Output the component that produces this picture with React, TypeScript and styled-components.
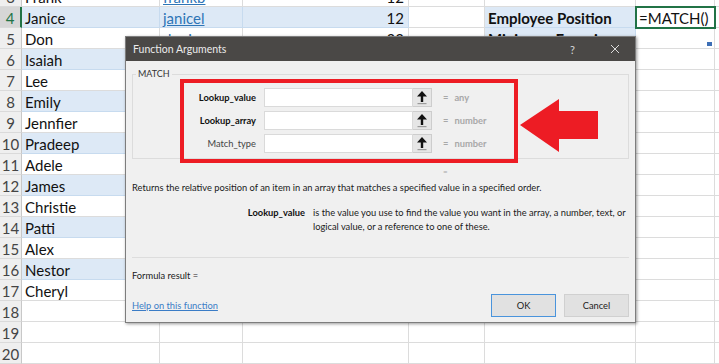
import React from "react";
import styled, { createGlobalStyle } from "styled-components";

const GlobalStyle = createGlobalStyle`
  html, body { margin: 0; padding: 0; background: #fff; overflow: hidden; }
  #root { width: 719px; height: 364px; }
`;

const Screen = styled.div`
  position: relative;
  width: 719px;
  height: 364px;
  overflow: hidden;
  background: #fff;
`;

/* ---------- spreadsheet ---------- */

const Sheet = styled.div`
  display: grid;
  grid-template-columns: 22px 138px 83px 166px 76px 151px 79px 1fr;
  grid-auto-rows: 21px;
  margin-top: -14px;
  font-family: Lato, "Liberation Sans", sans-serif;
  font-size: 15px;
  color: #111;
`;

const RowHead = styled.div<{ $active?: boolean }>`
  box-sizing: border-box;
  display: flex;
  align-items: center;
  justify-content: center;
  padding-top: 1px;
  background: ${(p) => (p.$active ? "#d6d6d6" : "#efefef")};
  color: ${(p) => (p.$active ? "#217346" : "#444")};
  border-right: ${(p) => (p.$active ? "2px solid #217346" : "1px solid #c8c8c8")};
  border-bottom: 1px solid #dadada;
`;

const Cell = styled.div<{ $band?: boolean; $num?: boolean; $bold?: boolean; $selected?: boolean }>`
  box-sizing: border-box;
  position: relative;
  display: flex;
  align-items: center;
  justify-content: ${(p) => (p.$num ? "flex-end" : "flex-start")};
  padding: 1px 4px 0 3px;
  background: ${(p) => (p.$band ? "#dde9f6" : "#fff")};
  border-right: 1px solid ${(p) => (p.$band ? "#c7dbef" : "#dcdcdc")};
  border-bottom: 1px solid ${(p) => (p.$band ? "#c7dbef" : "#dcdcdc")};
  font-weight: ${(p) => (p.$bold ? 700 : 400)};
  white-space: nowrap;
  outline: ${(p) => (p.$selected ? "2px solid #217346" : "none")};
  outline-offset: -1px;
  z-index: ${(p) => (p.$selected ? 1 : 0)};
`;

const Link = styled.span`
  color: #2e75b6;
  text-decoration: underline;
`;

const HandleMark = styled.span`
  position: absolute;
  right: 2px;
  bottom: 2px;
  width: 5px;
  height: 4px;
  background: #3d6fb6;
`;

type Row = { n: number; a?: string; b?: string; c?: string; e?: string; f?: string };

const rows: Row[] = [
  { n: 3, a: "Frank", b: "frankb", c: "12" },
  { n: 4, a: "Janice", b: "janicel", c: "12", e: "Employee Position", f: "=MATCH()" },
  { n: 5, a: "Don", b: "donj", c: "33", e: "Minimum Experience" },
  { n: 6, a: "Isaiah" },
  { n: 7, a: "Lee" },
  { n: 8, a: "Emily" },
  { n: 9, a: "Jennfier" },
  { n: 10, a: "Pradeep" },
  { n: 11, a: "Adele" },
  { n: 12, a: "James" },
  { n: 13, a: "Christie" },
  { n: 14, a: "Patti" },
  { n: 15, a: "Alex" },
  { n: 16, a: "Nestor" },
  { n: 17, a: "Cheryl" },
  { n: 18 },
  { n: 19 },
  { n: 20 },
];

/* ---------- dialog ---------- */

const Dialog = styled.div`
  position: absolute;
  left: 125px;
  top: 36px;
  width: 511px;
  box-sizing: border-box;
  background: #f0f0f0;
  border: 1px solid #7d7d7d;
  box-shadow: 1px 1px 3px rgba(0, 0, 0, 0.4);
  font-family: Lato, "Noto Sans", sans-serif;
  font-size: 9.3px;
  color: #1a1a1a;
  z-index: 2;
`;

const TitleBar = styled.div`
  display: flex;
  align-items: center;
  height: 24px;
  padding: 0 15px 0 7px;
  background: #4a4846;
  color: #ececec;
`;

const Title = styled.div`
  flex: 1;
  font-size: 10.5px;
`;

const TitleButtons = styled.div`
  display: flex;
  align-items: center;
  gap: 35px;
  font-size: 11px;
  color: #d8d8d8;
`;

const Body = styled.div`
  padding: 7px 6px 5px 6px;
`;

const Group = styled.fieldset`
  margin: 0;
  padding: 8px 0 5px 0;
  border: 1px solid #dcdcdc;
  min-width: 0;
`;

const Legend = styled.legend`
  margin-left: 3px;
  padding: 0 2px;
  font-size: 9px;
  line-height: 12px;
  color: #333;
`;

const ArgGrid = styled.div`
  display: grid;
  grid-template-columns: 131px 149px 19px 1fr;
  grid-auto-rows: 19px;
  row-gap: 4px;
  align-items: center;
`;

const ArgLabel = styled.div<{ $required?: boolean }>`
  text-align: right;
  padding-right: 8px;
  font-weight: ${(p) => (p.$required ? 700 : 400)};
  color: ${(p) => (p.$required ? "#111" : "#444")};
`;

const ArgInput = styled.div`
  box-sizing: border-box;
  height: 19px;
  background: #fff;
  border: 1px solid #dadada;
`;

const RefButton = styled.div`
  box-sizing: border-box;
  height: 19px;
  display: flex;
  align-items: center;
  justify-content: center;
  background: #e6e6e6;
  border: 1px solid #cdcdcd;
  border-left: none;
`;

const ArgValue = styled.div`
  display: flex;
  gap: 6px;
  padding-left: 11px;
  font-weight: 700;
  color: #a8a8a8;
`;

const ResultLine = styled.div`
  margin-top: 7px;
  padding-left: 311px;
  font-size: 8px;
  line-height: 10px;
  color: #a8a8a8;
`;

const Description = styled.div`
  margin-top: 6px;
  line-height: 12px;
`;

const Detail = styled.div`
  display: grid;
  grid-template-columns: 173px 1fr;
  column-gap: 8px;
  margin-top: 12px;
  line-height: 14px;
`;

const DetailLabel = styled.div`
  text-align: right;
  font-weight: 700;
  color: #111;
`;

const Separator = styled.div`
  margin-top: 23px;
  border-top: 1px solid #dddddd;
`;

const FormulaResult = styled.div`
  margin-top: 12px;
  line-height: 12px;
`;

const Footer = styled.div`
  display: flex;
  align-items: center;
  gap: 8px;
  margin-top: 12px;
`;

const HelpLink = styled.span`
  flex: 1;
  color: #3a7cc6;
  text-decoration: underline;
`;

const Button = styled.div<{ $default?: boolean }>`
  box-sizing: border-box;
  width: 65px;
  height: 23px;
  display: flex;
  align-items: center;
  justify-content: center;
  background: #e1e1e1;
  border: 1px solid ${(p) => (p.$default ? "#4a94dc" : "#d0d0d0")};
  color: #222;
`;

/* ---------- annotations ---------- */

const Highlight = styled.div`
  position: absolute;
  left: 180px;
  top: 79px;
  width: 338px;
  height: 84px;
  box-sizing: border-box;
  border: 4px solid #ed1c24;
  z-index: 3;
`;

const Arrow = styled.svg`
  position: absolute;
  left: 519px;
  top: 98px;
  z-index: 3;
`;

const UpIcon = () => (
  <svg width="12" height="15" viewBox="0 0 12 15">
    <polygon points="6,1 11,6.5 7.2,6.5 7.2,12 4.8,12 4.8,6.5 1,6.5" fill="#111" />
    <rect x="1.5" y="13" width="9" height="1.2" fill="#9a9a9a" />
  </svg>
);

const CloseIcon = () => (
  <svg width="10" height="10" viewBox="0 0 10 10">
    <path d="M1 1 L9 9 M9 1 L1 9" stroke="#dcdcdc" strokeWidth="1" />
  </svg>
);

const args = [
  { name: "Lookup_value", value: "any", required: true },
  { name: "Lookup_array", value: "number", required: true },
  { name: "Match_type", value: "number", required: false },
];

export default function App() {
  return (
    <Screen>
      <GlobalStyle />
      <Sheet>
        {rows.map((r) => {
          const band = r.n >= 4 && r.n <= 16 && r.n % 2 === 0;
          return (
            <React.Fragment key={r.n}>
              <RowHead $active={r.n === 4}>{r.n}</RowHead>
              <Cell $band={band}>{r.a}</Cell>
              <Cell $band={band}>{r.b && <Link>{r.b}</Link>}</Cell>
              <Cell $band={band} $num>{r.c}</Cell>
              <Cell />
              <Cell $band={!!r.e} $bold>{r.e}</Cell>
              <Cell $selected={!!r.f}>
                {r.f}
                {r.n === 5 && <HandleMark />}
              </Cell>
              <Cell />
            </React.Fragment>
          );
        })}
      </Sheet>

      <Dialog>
        <TitleBar>
          <Title>Function Arguments</Title>
          <TitleButtons>
            <span>?</span>
            <CloseIcon />
          </TitleButtons>
        </TitleBar>
        <Body>
          <Group>
            <Legend>MATCH</Legend>
            <ArgGrid>
              {args.map((a) => (
                <React.Fragment key={a.name}>
                  <ArgLabel $required={a.required}>{a.name}</ArgLabel>
                  <ArgInput />
                  <RefButton>
                    <UpIcon />
                  </RefButton>
                  <ArgValue>
                    <span>=</span>
                    <span>{a.value}</span>
                  </ArgValue>
                </React.Fragment>
              ))}
            </ArgGrid>
          </Group>
          <ResultLine>=</ResultLine>
          <Description>
            Returns the relative position of an item in an array that matches a specified value in a specified order.
          </Description>
          <Detail>
            <DetailLabel>Lookup_value</DetailLabel>
            <div>
              is the value you use to find the value you want in the array, a number, text, or logical value, or a
              reference to one of these.
            </div>
          </Detail>
          <Separator />
          <FormulaResult>Formula result =</FormulaResult>
          <Footer>
            <HelpLink>Help on this function</HelpLink>
            <Button $default>OK</Button>
            <Button>Cancel</Button>
          </Footer>
        </Body>
      </Dialog>

      <Highlight />
      <Arrow width="81" height="56" viewBox="0 0 81 56">
        <polygon points="1,27 40,1 40,13 79,13 79,41 40,41 40,54" fill="#ed1c24" />
      </Arrow>
    </Screen>
  );
}
